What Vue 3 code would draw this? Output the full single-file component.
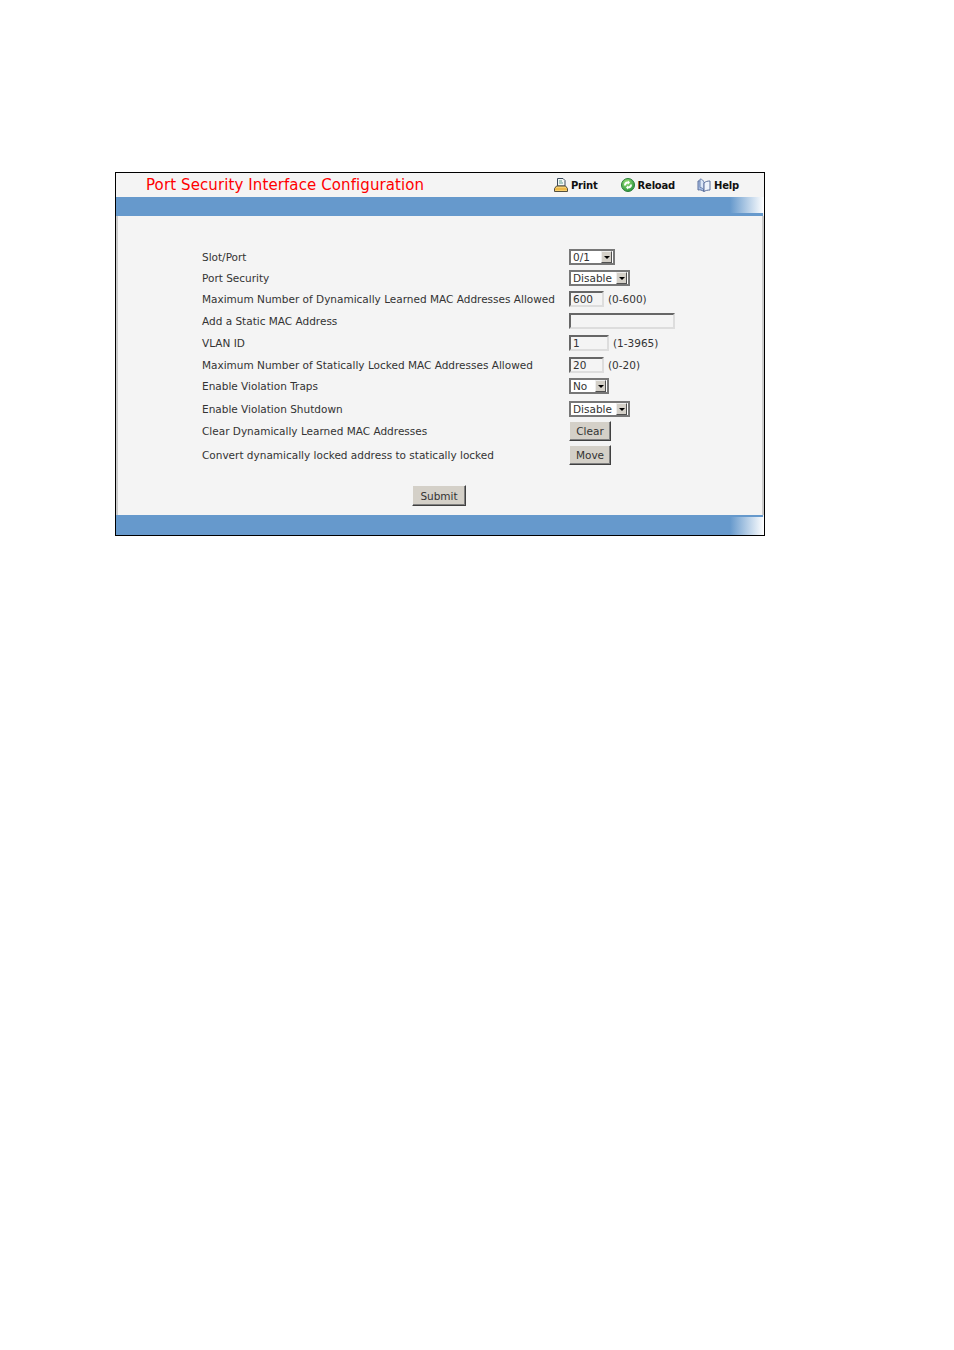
<script setup>
const rows = [
  { label: 'Slot/Port', type: 'select', value: '0/1', cls: 'w46' },
  { label: 'Port Security', type: 'select', value: 'Disable', cls: 'w61' },
  { label: 'Maximum Number of Dynamically Learned MAC Addresses Allowed', type: 'input', value: '600', cls: 'w35', hint: '(0-600)' },
  { label: 'Add a Static MAC Address', type: 'input', value: '', cls: 'w106' },
  { label: 'VLAN ID', type: 'input', value: '1', cls: 'w40', hint: '(1-3965)' },
  { label: 'Maximum Number of Statically Locked MAC Addresses Allowed', type: 'input', value: '20', cls: 'w35', hint: '(0-20)' },
  { label: 'Enable Violation Traps', type: 'select', value: 'No', cls: 'w40' },
  { label: 'Enable Violation Shutdown', type: 'select', value: 'Disable', cls: 'w61' },
  { label: 'Clear Dynamically Learned MAC Addresses', type: 'button', value: 'Clear' },
  { label: 'Convert dynamically locked address to statically locked', type: 'button', value: 'Move' },
]
</script>

<template>
  <div class="page">
    <div class="card">
      <header class="head">
        <h1 class="title">Port Security Interface Configuration</h1>
        <nav class="tools">
          <a class="tool print">
            <svg width="14" height="14" viewBox="0 0 14 14">
              <path d="M3.500.5h5.500l2 2v5.500h-7.500z" fill="#f4f7f4" stroke="#3a4a5c"/>
              <path d="M5 3h3M5 5h4" stroke="#5f9f8f" fill="none"/>
              <path d="M2.500 8h9l2 2.500v3h-13v-3z" fill="#f7d070" stroke="#54503f"/>
              <path d="M1 11h12" stroke="#e2a020"/>
            </svg>
            <span>Print</span>
          </a>
          <a class="tool reload">
            <svg width="14" height="14" viewBox="0 0 14 14">
              <defs>
                <radialGradient id="rg" cx=".4" cy=".3" r=".8">
                  <stop offset="0" stop-color="#9be07a"/>
                  <stop offset="1" stop-color="#1f8f35"/>
                </radialGradient>
              </defs>
              <circle cx="7" cy="7" r="6.500" fill="url(#rg)" stroke="#2b7d3a"/>
              <path d="M3 7.500A4 4 0 0 1 7 3.500V2.500L9 4.500 7 6.500V5.500A2.200 2.200 0 0 0 4.800 7.500z" fill="#fff"/>
              <path d="M11 6.500A4 4 0 0 1 7 10.500v1L5 9.500l2-2v1A2.200 2.200 0 0 0 9.200 6.500z" fill="#fff"/>
            </svg>
            <span>Reload</span>
          </a>
          <a class="tool help">
            <svg width="14" height="14" viewBox="0 0 14 14">
              <path d="M1 3C3 2.500 5 3 6.500 5V13.500C5 12 3 11.500 1 12z" fill="#a9c0e6" stroke="#5a6f9c"/>
              <path d="M3 1C5 1 6.500 2.500 7 4.500L7 12C6 10.500 4.500 9.500 3 9.500z" fill="#dbe6f7" stroke="#6f85b0"/>
              <path d="M7 5C8.500 3.500 10.500 3 13 3V12C10.500 12 8.500 12.500 7 13.500z" fill="#eef3fb" stroke="#5a6f9c"/>
            </svg>
            <span>Help</span>
          </a>
        </nav>
      </header>
      <div class="bar top"><i class="fade"></i></div>

      <main class="body">
        <div class="grid">
          <template v-for="row in rows" :key="row.label">
            <div class="label" :class="{ tall: row.type === 'button' }">{{ row.label }}</div>
            <div class="control">
              <div v-if="row.type === 'select'" class="select" :class="row.cls">
                <span class="sel-text">{{ row.value }}</span>
                <span class="arrow"><i></i></span>
              </div>
              <div v-else-if="row.type === 'input'" class="input" :class="row.cls">{{ row.value }}</div>
              <button v-else class="btn small" type="button">{{ row.value }}</button>
              <span v-if="row.hint" class="hint">{{ row.hint }}</span>
            </div>
          </template>
        </div>
        <div class="submit-row">
          <button class="btn submit" type="button">Submit</button>
        </div>
      </main>

      <div class="bar bottom"><i class="fade"></i></div>
    </div>
  </div>
</template>

<style scoped>
.page {
  padding: 172px 0 0 115px;
  height: 1178px;
  background: #fff;
  font-family: "DejaVu Sans", Verdana, sans-serif;
  font-size: 10.5px;
  color: #333;
}
.card {
  width: 648px;
  height: 362px;
  border: 1px solid #000;
  background: #f4f4f4;
  display: flex;
  flex-direction: column;
}
.head {
  height: 24px;
  display: flex;
  align-items: center;
  padding-left: 30px;
  flex: none;
}
.title {
  margin: 0;
  font-size: 15px;
  font-weight: 400;
  letter-spacing: 0.1px;
  color: #f00;
  line-height: 24px;
  white-space: nowrap;
}
.tools {
  margin-left: auto;
  display: flex;
  align-items: center;
  color: #111;
  font-weight: 700;
  font-size: 10px;
  letter-spacing: -0.2px;
}
.tool {
  display: flex;
  align-items: center;
  gap: 3px;
}
.print { margin-right: 23px; }
.reload { margin-right: 22px; }
.help { margin-right: 25px; }
.bar {
  flex: none;
  height: 19px;
  margin-right: 1px;
  background: #6699cc;
  position: relative;
}
.bar.bottom { height: 20px; }
.fade {
  position: absolute;
  right: -1px;
  top: 0;
  bottom: 3px;
  width: 34px;
  background: linear-gradient(to right, #6699cc, #ffffff);
}
.bar.bottom .fade { top: 2px; bottom: 0; }
.body {
  flex: 1;
  border-left: 2px solid #ccc;
  border-right: 2px solid #ccc;
  min-height: 0;
  padding-top: 33px;
  display: flex;
  flex-direction: column;
}
.grid {
  display: grid;
  grid-template-columns: 367px 1fr;
  grid-template-rows: 21px 21px 22px 22px 22px 21px 23px 20px 24px 20px;
  margin-left: 84px;
  align-items: start;
}
.label {
  line-height: 16px;
  white-space: nowrap;
}
.label.tall { line-height: 20px; }
.control {
  display: flex;
  align-items: center;
}
.select, .input {
  box-sizing: border-box;
  height: 16px;
  line-height: 13px;
  border: 2px solid;
  padding-left: 2px;
  white-space: nowrap;
}
.input {
  background: #f4f4f4;
  border-color: #666 #ddd #ddd #666;
}
.select {
  background: #fff;
  display: flex;
  justify-content: space-between;
  padding-right: 1px;
  border-color: #777;
}
.sel-text { line-height: 12px; }
.arrow {
  flex: none;
  width: 11px;
  height: 12px;
  box-sizing: border-box;
  background: #d4d0c8;
  border: 1px solid;
  border-color: #eee #505050 #505050 #eee;
  display: flex;
  align-items: center;
  justify-content: center;
}
.arrow i {
  width: 0;
  height: 0;
  border-left: 3.500px solid transparent;
  border-right: 3.500px solid transparent;
  border-top: 3.500px solid #000;
}
.w35 { width: 35px; }
.w40 { width: 40px; }
.w46 { width: 46px; }
.w61 { width: 61px; }
.w106 { width: 106px; }
.hint { margin-left: 4px; }
.btn {
  box-sizing: border-box;
  margin: 0;
  padding: 0;
  font: inherit;
  color: #333;
  background: #d4d0c8;
  border: 1px solid;
  border-color: #f4f4f4 #404040 #404040 #f4f4f4;
  box-shadow: inset -1px -1px 0 #808080;
}
.btn.small { width: 42px; height: 20px; }
.submit-row {
  margin-top: 20px;
  padding-left: 294px;
}
.btn.submit { width: 54px; height: 21px; }
</style>

<style>
html, body { background: #fff; }
</style>
